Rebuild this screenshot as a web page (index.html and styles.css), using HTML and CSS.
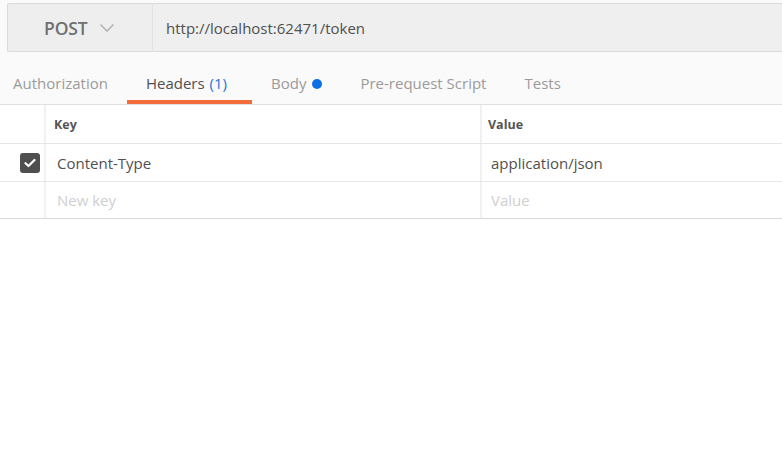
FILE: index.html
```html
<!DOCTYPE html>
<html>
<head>
<meta charset="utf-8">
<link rel="stylesheet" href="styles.css">
</head>
<body>
<div class="app">
  <div class="request-bar">
    <div class="method">
      <span class="method-name">POST</span>
      <svg class="chevron" width="16" height="10" viewBox="0 0 16 10"><path d="M1.5 1.5 L8 8 L14.5 1.5" fill="none" stroke="#b5b5b5" stroke-width="1.6"/></svg>
    </div>
    <div class="url">http://localhost:62471/token</div>
  </div>
  <div class="tabs">
    <div class="tab first">Authorization</div>
    <div class="tab active">Headers <span class="count">(1)</span></div>
    <div class="tab">Body <span class="dot"></span></div>
    <div class="tab">Pre-request Script</div>
    <div class="tab">Tests</div>
  </div>
  <div class="table">
    <div class="row head">
      <div class="cell check"></div>
      <div class="cell key">Key</div>
      <div class="cell value">Value</div>
    </div>
    <div class="row">
      <div class="cell check"><span class="checkbox"><svg width="12" height="10" viewBox="0 0 12 10"><path d="M1.5 5.2 L4.5 8 L10.5 2" fill="none" stroke="#fff" stroke-width="2.2" stroke-linecap="round" stroke-linejoin="round"/></svg></span></div>
      <div class="cell key text">Content-Type</div>
      <div class="cell value text">application/json</div>
    </div>
    <div class="row last">
      <div class="cell check"></div>
      <div class="cell key placeholder">New key</div>
      <div class="cell value placeholder">Value</div>
    </div>
  </div>
</div>
</body>
</html>
```

FILE: styles.css
```css
* { box-sizing: border-box; }
html, body { margin: 0; padding: 0; background: #fff; }
body { font-family: "Open Sans", "Liberation Sans", sans-serif; width: 782px; height: 457px; overflow: hidden; }
.app { display: flex; flex-direction: column; }

.request-bar {
  display: flex;
  height: 52px;
  padding: 3px 0 0 7px;
  background: #fafafa;
}
.method {
  width: 146px;
  display: flex;
  align-items: center;
  gap: 11px;
  background: #eeeeee;
  border: 1px solid #dadada;
  border-right: 1px solid #e2e2e2;
  border-radius: 2px 0 0 2px;
  padding-left: 36px;
}
.method-name { font-size: 17.5px; font-weight: 600; color: #707070; letter-spacing: -0.1px; }
.chevron { margin-top: 1px; }
.url {
  flex: 1;
  display: flex;
  align-items: center;
  padding-left: 13px;
  background: #efefef;
  border-top: 1px solid #dadada;
  border-bottom: 1px solid #dadada;
  font-size: 15px;
  color: #505050;
}

.tabs {
  display: flex;
  height: 53px;
  background: #fafafa;
  border-bottom: 1px solid #e0e0e0;
}
.tab {
  display: flex;
  align-items: center;
  padding: 14px 19px 0 19px;
  font-size: 15px;
  color: #9a9a9a;
  height: 100%;
  border-bottom: 4px solid transparent;
}
.tab.first { padding-left: 13px; }
.tab.active {
  color: #505050;
  border-bottom-color: #f26b3a;
  padding-right: 25px;
}
.count { color: #1e76d1; margin-left: 5px; }
.dot { display: inline-block; width: 10px; height: 10px; border-radius: 50%; background: #0b6fe6; margin-left: 6px; margin-top: 1px; }

.table { border-bottom: 1px solid #d8d8d8; }
.row { display: flex; border-bottom: 1px solid #e6e6e6; height: 38px; }
.row.head { height: 39px; }
.row.last { border-bottom: none; height: 36px; }
.cell { display: flex; align-items: center; }
.cell.check { width: 46px; justify-content: flex-end; padding-right: 4px; border-right: 2px solid #f1f1f1; }
.cell.key { width: 436px; padding-left: 8px; border-right: 2px solid #f1f1f1; }
.cell.value { flex: 1; padding-left: 6px; }
.head .cell { font-size: 12.5px; font-weight: 700; color: #555; }
.text { font-size: 15px; color: #505050; }
.text.key { padding-left: 11px; }
.text.value { padding-left: 9px; }
.placeholder { font-size: 15px; color: #cfcfcf; }
.placeholder.key { padding-left: 11px; }
.placeholder.value { padding-left: 9px; }
.checkbox {
  width: 20px; height: 20px; border-radius: 3px; background: #4f4f4f;
  display: flex; align-items: center; justify-content: center;
}
```
